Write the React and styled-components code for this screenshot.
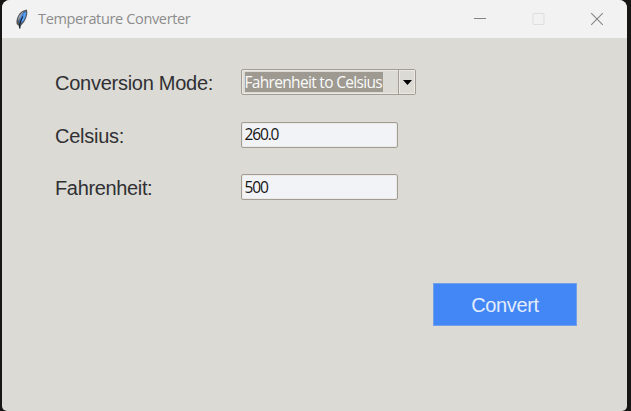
import React from "react";
import styled, { createGlobalStyle } from "styled-components";

const GlobalStyle = createGlobalStyle`
  * { box-sizing: border-box; }
  body { margin: 0; background: #171614; overflow: hidden; }
`;

const Desktop = styled.div`
  height: 411px;
  padding: 0 4px 0 2px;
  background: #171614;
`;

const Window = styled.main`
  height: 411px;
  display: flex;
  flex-direction: column;
  overflow: hidden;
  border-radius: 8px 8px 5px 5px;
  background: #dbdad5;
  font-family: "Liberation Sans", Arial, sans-serif;
`;

const TitleBar = styled.header`
  height: 38px;
  flex: none;
  display: flex;
  align-items: center;
  padding-left: 12px;
  background: #f2f2f2;
`;

const Title = styled.h1`
  flex: 1;
  margin: 0 0 0 9px;
  font: 400 14.5px/20px "Open Sans", "Noto Sans", sans-serif;
  letter-spacing: ${(p) => p.$spacing};
  color: #8c8c8c;
  white-space: nowrap;
`;

const Controls = styled.div`
  display: flex;
  gap: 44.5px;
  padding-right: 23px;
`;

const ControlButton = styled.button`
  display: flex;
  padding: 0;
  border: 0;
  background: none;
  color: ${(p) => (p.disabled ? "#dedede" : "#858585")};
`;

const Form = styled.form`
  display: flex;
  flex-direction: column;
  gap: 26.5px;
  padding: 31px 50px 0 53px;
`;

const Row = styled.div`
  display: flex;
  align-items: center;
  height: 26px;
`;

const Label = styled.label`
  width: 186px;
  font-size: 20px;
  line-height: 26px;
  letter-spacing: ${(p) => p.$spacing};
  color: #303033;
  white-space: nowrap;
  padding-top: 2px;
`;

const Field = styled.div`
  width: ${(p) => p.$width};
  height: 26px;
  display: flex;
  align-items: center;
  border: 1px solid #a29d94;
  border-radius: 2px;
  background: ${(p) => p.$fill};
  box-shadow: inset 0 0 0 1px #ece9e4;
  font: 400 15.5px/21px "Open Sans", "Noto Sans", sans-serif;
  letter-spacing: ${(p) => p.$spacing};
  color: #151515;
  padding-left: 2.5px;
`;

const Selection = styled.span`
  width: 138px;
  height: 20px;
  line-height: 21px;
  background: #9e9a91;
  color: #fafafa;
  white-space: nowrap;
`;

const Arrow = styled.span`
  width: 17px;
  height: 24px;
  margin-left: auto;
  display: flex;
  align-items: center;
  justify-content: center;
  border-left: 1px solid #a29d94;
  box-shadow: inset 0 0 0 1px #ece9e4;
`;

const ConvertButton = styled.button`
  align-self: flex-end;
  width: 144px;
  height: 43px;
  margin-top: 56px;
  padding: 1px 0 0;
  border: 1px solid #72a0e8;
  background: #4387f6;
  color: #e4edfc;
  font: 400 20px/26px "Liberation Sans", Arial, sans-serif;
  letter-spacing: ${(p) => p.$spacing};
`;

function Feather() {
  return (
    <svg width="15" height="22" viewBox="0 0 15 22">
      <path d="M5.5 20.5L4.5 17.5C1.6 17 2 12 4 8C6 4 9 2 12.9 1.5C13.9 5 13 9 11 12.5C9.6 15 8 16.5 6.9 17.5Z" fill="#55585d" />
      <path d="M5.5 15.5C4.5 11 7.2 5 12 3.2C12.8 7 10.3 13.5 6.5 15.5Z" fill="#4387df" />
      <path d="M4 13C4 9 6.5 5 9.5 3.8L6 10Z" fill="#9ba5b2" />
      <path d="M5.8 20.5V16.5C6.2 13.5 7.4 11 8.8 8.5" stroke="#15202e" strokeWidth="1.3" fill="none" />
      <path d="M8.2 13C9.8 10.5 10.6 8 11.3 5" stroke="#5ca5f5" strokeWidth="1.4" fill="none" />
    </svg>
  );
}

export default function App() {
  return (
    <>
      <GlobalStyle />
      <Desktop>
        <Window>
          <TitleBar>
            <Feather />
            <Title $spacing="-0.35px">Temperature Converter</Title>
            <Controls>
              <ControlButton aria-label="Minimize">
                <svg width="14" height="14"><path d="M1 6.5H13" stroke="currentColor" /></svg>
              </ControlButton>
              <ControlButton aria-label="Maximize" disabled>
                <svg width="14" height="14"><rect x="1" y="1.5" width="11" height="11" rx="1" fill="none" stroke="currentColor" /></svg>
              </ControlButton>
              <ControlButton aria-label="Close">
                <svg width="14" height="14"><path d="M1.2 1.2L12.8 12.8M12.8 1.2L1.2 12.8" stroke="currentColor" strokeWidth="1.1" /></svg>
              </ControlButton>
            </Controls>
          </TitleBar>
          <Form onSubmit={(e) => e.preventDefault()}>
            <Row>
              <Label $spacing="-0.26px">Conversion Mode:</Label>
              <Field $width="175px" $fill="#dbdad5" $spacing="-0.68px">
                <Selection>Fahrenheit to Celsius</Selection>
                <Arrow>
                  <svg width="9" height="5"><path d="M0 0H9L4.5 5Z" fill="#000" /></svg>
                </Arrow>
              </Field>
            </Row>
            <Row>
              <Label $spacing="-0.26px">Celsius:</Label>
              <Field $width="157px" $fill="#f1f3f6" $spacing="-1.15px">260.0</Field>
            </Row>
            <Row>
              <Label $spacing="-0.35px">Fahrenheit:</Label>
              <Field $width="157px" $fill="#f1f3f6" $spacing="-1.15px">500</Field>
            </Row>
            <ConvertButton type="submit" $spacing="-0.35px">Convert</ConvertButton>
          </Form>
        </Window>
      </Desktop>
    </>
  );
}
